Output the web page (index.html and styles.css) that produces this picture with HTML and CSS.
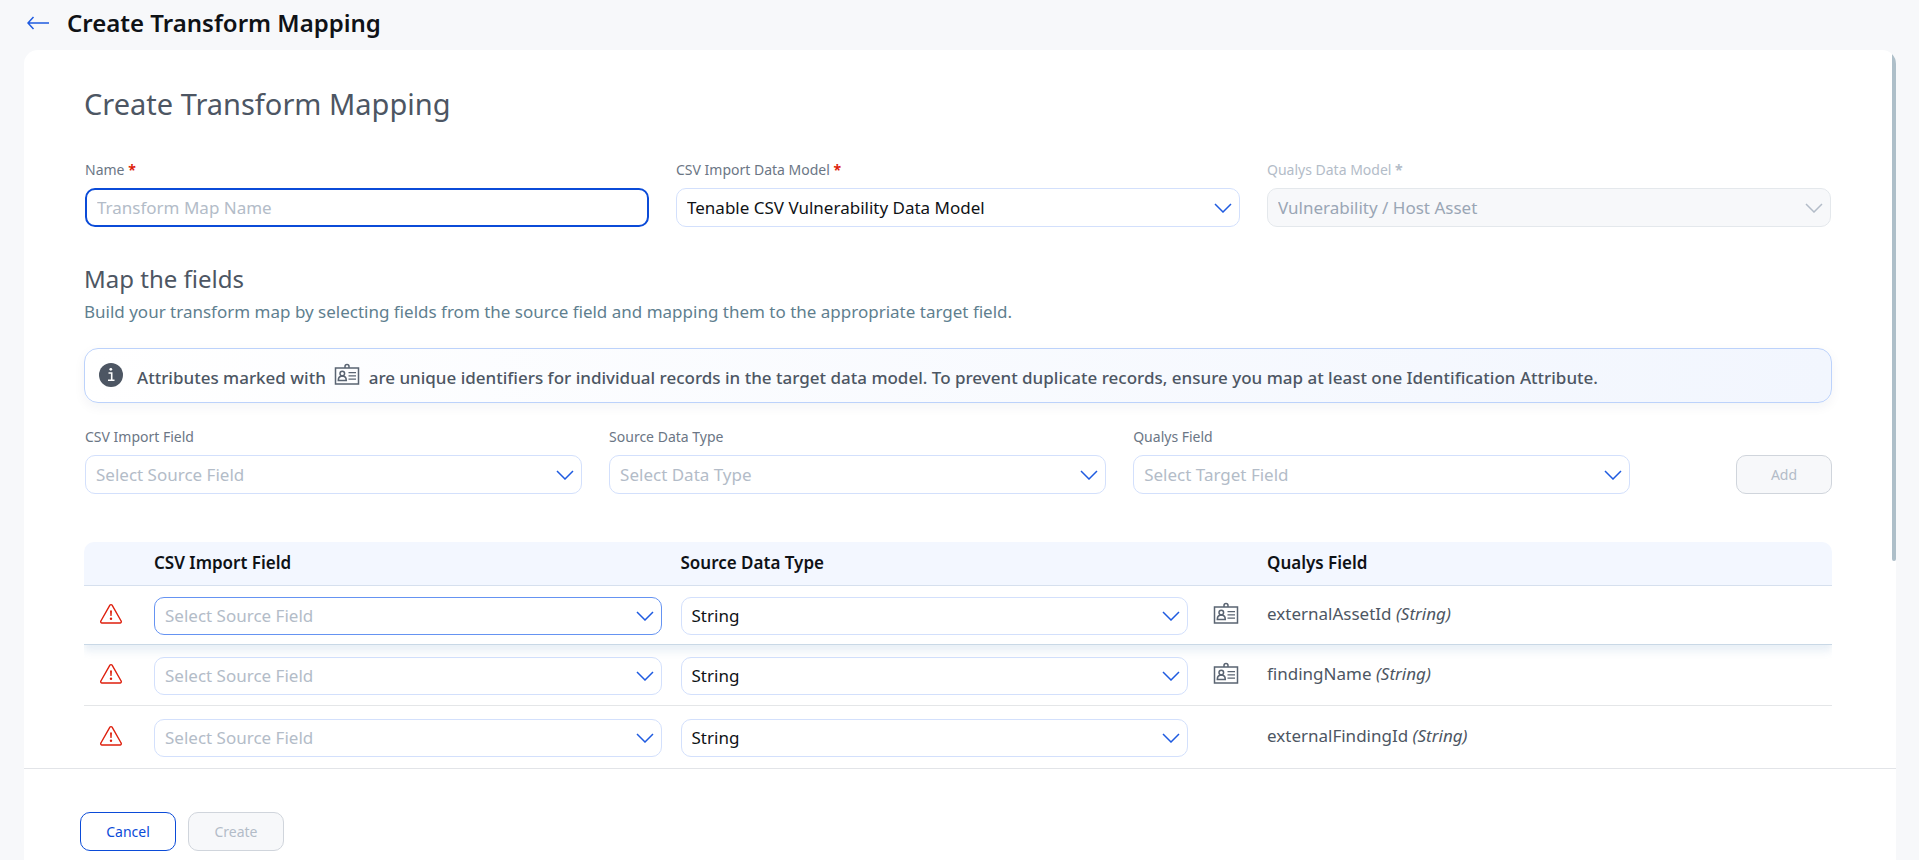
FILE: index.html
```html
<!DOCTYPE html>
<html lang="en">
<head>
    <meta charset="UTF-8">
    <meta name="viewport" content="width=device-width, initial-scale=1.0">
    <title>Create Transform Mapping</title>
    <link rel="stylesheet" href="styles.css">
</head>
<body>
    <!-- shared icons -->
    <svg class="sprite" aria-hidden="true">
        <symbol id="icon-id" viewBox="0 0 26 24">
            <g fill="none" stroke="#5a6472" stroke-width="1.5">
                <path d="M1.500 5h23v16h-23z"/>
                <path d="M11 5V3.500a2 2 0 0 1 4 0V5"/>
                <circle cx="8.300" cy="10.500" r="2.300"/>
                <path d="M4.300 17.500c0-2.500 1.300-4 2.700-4.300h2.600c1.400.3 2.700 1.800 2.700 4.300z"/>
                <path d="M14.500 9.700h7.500M14.500 12.900h7.500M14.500 16.100h7.500" stroke-width="1.300"/>
            </g>
        </symbol>
        <symbol id="icon-warning" viewBox="0 0 24 22">
            <path d="M10.900 2.200a1.300 1.300 0 0 1 2.200 0l9 15.800a1.300 1.300 0 0 1-1.100 2H3a1.300 1.300 0 0 1-1.100-2z" fill="none" stroke="#de1f0d" stroke-width="1.400"/>
            <path d="M11 7.500h2l-.4 5.500h-1.200z" fill="#de1f0d"/>
            <circle cx="12" cy="15.800" r="1.200" fill="#de1f0d"/>
        </symbol>
    </svg>

    <header class="page-header">
        <a href="#" class="back" aria-label="Back">
            <svg width="22" height="14" viewBox="0 0 22 14"><path d="M6.500 1L1 7l5.500 6M1 7h21" fill="none" stroke="#1f5be0" stroke-width="1.500"/></svg>
        </a>
        <h1>Create Transform Mapping</h1>
    </header>

    <main class="card">
        <div class="content">
            <h2>Create Transform Mapping</h2>

            <form class="details">
                <div class="field">
                    <label for="name">Name <b>*</b></label>
                    <input type="text" id="name" class="control" placeholder="Transform Map Name" autofocus>
                </div>
                <div class="field">
                    <label for="csvModel">CSV Import Data Model <b>*</b></label>
                    <select id="csvModel" class="control">
                        <option>Tenable CSV Vulnerability Data Model</option>
                    </select>
                </div>
                <div class="field disabled">
                    <label for="qualysModel">Qualys Data Model <b>*</b></label>
                    <select id="qualysModel" class="control" disabled>
                        <option>Vulnerability / Host Asset</option>
                    </select>
                </div>
            </form>

            <h3>Map the fields</h3>
            <p class="hint">Build your transform map by selecting fields from the source field and mapping them to the appropriate target field.</p>

            <div class="info">
                <svg class="info-icon" width="24" height="24" viewBox="0 0 24 24">
                    <circle cx="12" cy="12" r="12" fill="#4d5663"/>
                    <circle cx="11.800" cy="6.300" r="1.400" fill="#fff"/>
                    <path d="M9.500 10h3.200v7M9 17.300h6.500" fill="none" stroke="#fff" stroke-width="1.600"/>
                </svg>
                <p>Attributes marked with <svg class="id-icon"><use href="#icon-id"/></svg> are unique identifiers for individual records in the target data model. To prevent duplicate records, ensure you map at least one Identification Attribute.</p>
            </div>

            <form class="add-row">
                <div class="field">
                    <label for="sourceField">CSV Import Field</label>
                    <select id="sourceField" class="control empty">
                        <option>Select Source Field</option>
                    </select>
                </div>
                <div class="field">
                    <label for="dataType">Source Data Type</label>
                    <select id="dataType" class="control empty">
                        <option>Select Data Type</option>
                    </select>
                </div>
                <div class="field">
                    <label for="targetField">Qualys Field</label>
                    <select id="targetField" class="control empty">
                        <option>Select Target Field</option>
                    </select>
                </div>
                <button type="button" class="btn" disabled>Add</button>
            </form>

            <table class="mapping">
                <colgroup>
                    <col class="col-status">
                    <col>
                    <col>
                    <col class="col-id">
                    <col class="col-target">
                </colgroup>
                <thead>
                    <tr>
                        <th></th>
                        <th>CSV Import Field</th>
                        <th>Source Data Type</th>
                        <th></th>
                        <th>Qualys Field</th>
                    </tr>
                </thead>
                <tbody>
                    <tr class="active">
                        <td><svg class="warning"><use href="#icon-warning"/></svg></td>
                        <td><select class="control empty" aria-label="CSV Import Field"><option>Select Source Field</option></select></td>
                        <td><select class="control" aria-label="Source Data Type"><option>String</option></select></td>
                        <td><svg class="id-icon"><use href="#icon-id"/></svg></td>
                        <td>externalAssetId <i>(String)</i></td>
                    </tr>
                    <tr>
                        <td><svg class="warning"><use href="#icon-warning"/></svg></td>
                        <td><select class="control empty" aria-label="CSV Import Field"><option>Select Source Field</option></select></td>
                        <td><select class="control" aria-label="Source Data Type"><option>String</option></select></td>
                        <td><svg class="id-icon"><use href="#icon-id"/></svg></td>
                        <td>findingName <i>(String)</i></td>
                    </tr>
                    <tr>
                        <td><svg class="warning"><use href="#icon-warning"/></svg></td>
                        <td><select class="control empty" aria-label="CSV Import Field"><option>Select Source Field</option></select></td>
                        <td><select class="control" aria-label="Source Data Type"><option>String</option></select></td>
                        <td></td>
                        <td>externalFindingId <i>(String)</i></td>
                    </tr>
                </tbody>
            </table>
        </div>

        <footer class="actions">
            <button type="button" class="btn btn-outline">Cancel</button>
            <button type="button" class="btn" disabled>Create</button>
        </footer>
        <div class="scroll-thumb"></div>
    </main>
</body>
</html>
```
FILE: styles.css
```css
* { box-sizing: border-box; }
body {
    margin: 0;
    height: 100vh;
    display: flex;
    flex-direction: column;
    overflow: hidden;
    font-family: "Noto Sans", "Open Sans", sans-serif;
    font-size: 17px;
    line-height: 24px;
    color: #4d5663;
    background: #f7f8fa;
}
h1, h2, h3, p { margin: 0; }
.sprite { position: absolute; width: 0; height: 0; }

.page-header {
    display: flex;
    align-items: center;
    gap: 18px;
    height: 50px;
    padding: 0 27px 4px;
}
.back { display: flex; }
h1 {
    font-size: 24px;
    line-height: 32px;
    font-weight: 600;
    color: #0f1216;
}

.card {
    position: relative;
    flex: 1;
    min-height: 0;
    display: flex;
    flex-direction: column;
    margin: 0 23px 0 24px;
    background: #fff;
    border-radius: 14px 14px 0 0;
    overflow: hidden;
}
.content {
    flex: 1;
    min-height: 0;
    overflow: hidden;
    padding: 34px 64px 0 60px;
}
h2 {
    font-size: 29px;
    line-height: 40px;
    font-weight: 400;
}
h3 {
    margin-top: 36px;
    font-size: 24px;
    line-height: 32px;
    font-weight: 400;
}
.hint { margin-top: 5px; color: #5f7f8f; }

/* fields */
.details {
    display: grid;
    grid-template-columns: repeat(3, 1fr);
    gap: 27px;
    margin: 36px 1px 0;
}
label {
    display: block;
    margin-bottom: 8px;
    font-size: 14px;
    line-height: 20px;
    color: #6b7685;
}
label b { color: #de1f0d; }
.disabled label, .disabled label b { color: #b3bcc8; }
.control {
    display: block;
    width: 100%;
    height: 39px;
    padding: 0 10px;
    border: 1px solid #d3e0fc;
    border-radius: 10px;
    background-color: #fff;
    font: inherit;
    color: #0f1216;
    outline: none;
    appearance: none;
}
select.control {
    background-image: url("data:image/svg+xml,%3Csvg xmlns='http://www.w3.org/2000/svg' width='18' height='10'%3E%3Cpath d='M1 1l8 8 8-8' fill='none' stroke='%231f5be0' stroke-width='1.5'/%3E%3C/svg%3E");
    background-repeat: no-repeat;
    background-position: right 7px center;
}
input.control { border: 2px solid #0b4bd8; }
.control::placeholder { color: #b3bcc8; opacity: 1; }
.control.empty { color: #b3bcc8; }
select.control:disabled {
    background-color: #f7f8fa;
    border-color: #e4e8ec;
    color: #9aa6b5;
    opacity: 1;
    background-image: url("data:image/svg+xml,%3Csvg xmlns='http://www.w3.org/2000/svg' width='18' height='10'%3E%3Cpath d='M1 1l8 8 8-8' fill='none' stroke='%23b3bcc8' stroke-width='1.5'/%3E%3C/svg%3E");
}

.info {
    display: flex;
    gap: 14px;
    min-height: 55px;
    margin-top: 24px;
    padding: 14px 14px 0;
    border: 1px solid #bcd2fb;
    border-radius: 14px;
    background: linear-gradient(90deg, #fff, #f2f6fe);
    box-shadow: 0 4px 12px rgba(20, 40, 80, 0.05);
    font-weight: 500;
}
.info-icon { flex: none; }
.info p { padding-top: 3px; }
.id-icon { width: 26px; height: 24px; vertical-align: middle; }
.info .id-icon { margin: -8px 4px 0; }

.add-row {
    display: grid;
    grid-template-columns: repeat(3, 30%) 10%;
    align-items: end;
    margin-top: 24px;
    padding-left: 1px;
}
.add-row .field { padding-right: 27px; }
.add-row .btn { justify-self: end; }

.btn {
    width: 96px;
    height: 39px;
    border: 1px solid #d0d5dc;
    border-radius: 10px;
    background: #f7f8fa;
    font: inherit;
    font-size: 14px;
    color: #b3bcc8;
}
.btn-outline {
    border-color: #0b4bd8;
    background: #fff;
    color: #0b4bd8;
}

/* mapping table */
.mapping {
    width: 100%;
    margin-top: 48px;
    table-layout: fixed;
    border-collapse: separate;
    border-spacing: 0;
}
.col-status { width: 70px; }
.col-id { width: 60px; }
.col-target { width: 565px; }
.mapping th {
    height: 44px;
    padding: 0 0 2px;
    text-align: left;
    font-weight: 600;
    color: #0f1216;
    background: #f3f7ff;
    border-bottom: 1px solid #d6e0ee;
}
.mapping th:first-child { border-top-left-radius: 10px; }
.mapping th:last-child { border-top-right-radius: 10px; }
.mapping td {
    height: 61px;
    padding: 0 0 2px;
    border-bottom: 1px solid #e4e6e8;
}
.mapping td:nth-child(2), .mapping td:nth-child(3) { padding: 2px 0 0; }
.mapping .active td { height: 59px; border-bottom-color: #c9d8e6; }
.mapping .active {
    box-shadow: 0 6px 8px rgba(90, 140, 190, 0.14);
    clip-path: inset(0 0 -14px 0);
}
.mapping tr:last-child td { border-bottom: none; }
.mapping .control { width: calc(100% - 19px); height: 38px; }
.mapping .active .empty { border-color: #6593f2; }
.mapping td svg { display: block; }
.mapping .id-icon { margin-left: 6px; }
.warning { width: 24px; height: 22px; margin-left: 15px; }

.actions {
    display: flex;
    gap: 12px;
    height: 92px;
    padding: 43px 56px 0;
    background: #fff;
    border-top: 1px solid #e2e4e8;
}
.scroll-thumb {
    position: absolute;
    top: 0;
    right: 0;
    width: 4px;
    height: 511px;
    border-radius: 2px;
    background: #aebfc9;
}
```
